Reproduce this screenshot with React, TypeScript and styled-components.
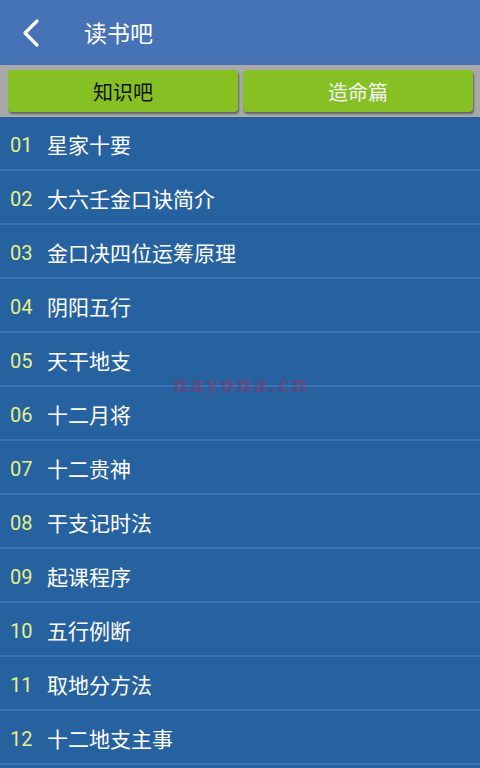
import React from "react"
import styled, { createGlobalStyle } from "styled-components"

const items = [
  "星家十要",
  "大六壬金口诀简介",
  "金口决四位运筹原理",
  "阴阳五行",
  "天干地支",
  "十二月将",
  "十二贵神",
  "干支记时法",
  "起课程序",
  "五行例断",
  "取地分方法",
  "十二地支主事",
]

const GlobalStyle = createGlobalStyle`
  html, body {
    margin: 0;
    padding: 0;
    background: #2762a0;
    font-family: "Noto Sans CJK SC", Roboto, sans-serif;
  }
`

const Screen = styled.div`
  position: relative;
  width: 480px;
  height: 768px;
  overflow: hidden;
  background: #2762a0;
`

const Header = styled.div`
  height: 65px;
  background: #4673b5;
  display: flex;
  align-items: center;
`

const BackButton = styled.div`
  width: 84px;
  display: flex;
  align-items: center;
  padding-left: 20px;
  box-sizing: border-box;
`

const Title = styled.div`
  color: #fff;
  font-size: 23px;
  margin-top: -2px;
`

const TabBar = styled.div`
  height: 52px;
  background: #a9a9a9;
  display: flex;
  gap: 5px;
  padding: 5px 7px 0 8px;
  box-sizing: border-box;
`

const Tab = styled.div<{ $active?: boolean }>`
  flex: 1;
  height: 42px;
  background: #86c023;
  border-radius: 4px;
  box-shadow: 1px 2px 2px rgba(40, 40, 40, 0.55);
  display: flex;
  align-items: center;
  justify-content: center;
  font-size: 20px;
  padding-top: 1px;
  box-sizing: border-box;
  color: ${({ $active }) => ($active ? "#111" : "#f4f4f4")};
`

const List = styled.div`
  display: flex;
  flex-direction: column;
`

const Row = styled.div`
  height: 54px;
  display: flex;
  align-items: center;
  padding-top: 1px;
  box-sizing: border-box;
  border-bottom: 2px solid #3a74b6;
`

const Num = styled.span`
  width: 47px;
  padding: 3px 0 0 10px;
  box-sizing: border-box;
  color: #e6f08c;
  font-family: Roboto, sans-serif;
  font-weight: 400;
  font-size: 20px;
`

const Name = styled.span`
  color: #fff;
  font-size: 21px;
`

const Watermark = styled.div`
  position: absolute;
  left: 173px;
  top: 369px;
  font-family: "Liberation Serif", serif;
  font-weight: bold;
  font-size: 26px;
  letter-spacing: 2.5px;
  color: #9a3060;
  opacity: 0.5;
  pointer-events: none;
`

const App = () => {
  return (
    <Screen>
      <GlobalStyle />
      <Header>
        <BackButton>
          <svg width="22" height="30" viewBox="0 0 22 30">
            <path d="M17 3 L5 15 L17 27" fill="none" stroke="#fff" strokeWidth="3.2" strokeLinecap="round" strokeLinejoin="round" />
          </svg>
        </BackButton>
        <Title>读书吧</Title>
      </Header>
      <TabBar>
        <Tab $active>知识吧</Tab>
        <Tab>造命篇</Tab>
      </TabBar>
      <List>
        {items.map((name, i) => (
          <Row key={name}>
            <Num>{String(i + 1).padStart(2, "0")}</Num>
            <Name>{name}</Name>
          </Row>
        ))}
      </List>
      <Watermark>nayona.cn</Watermark>
    </Screen>
  )
}

export default App
